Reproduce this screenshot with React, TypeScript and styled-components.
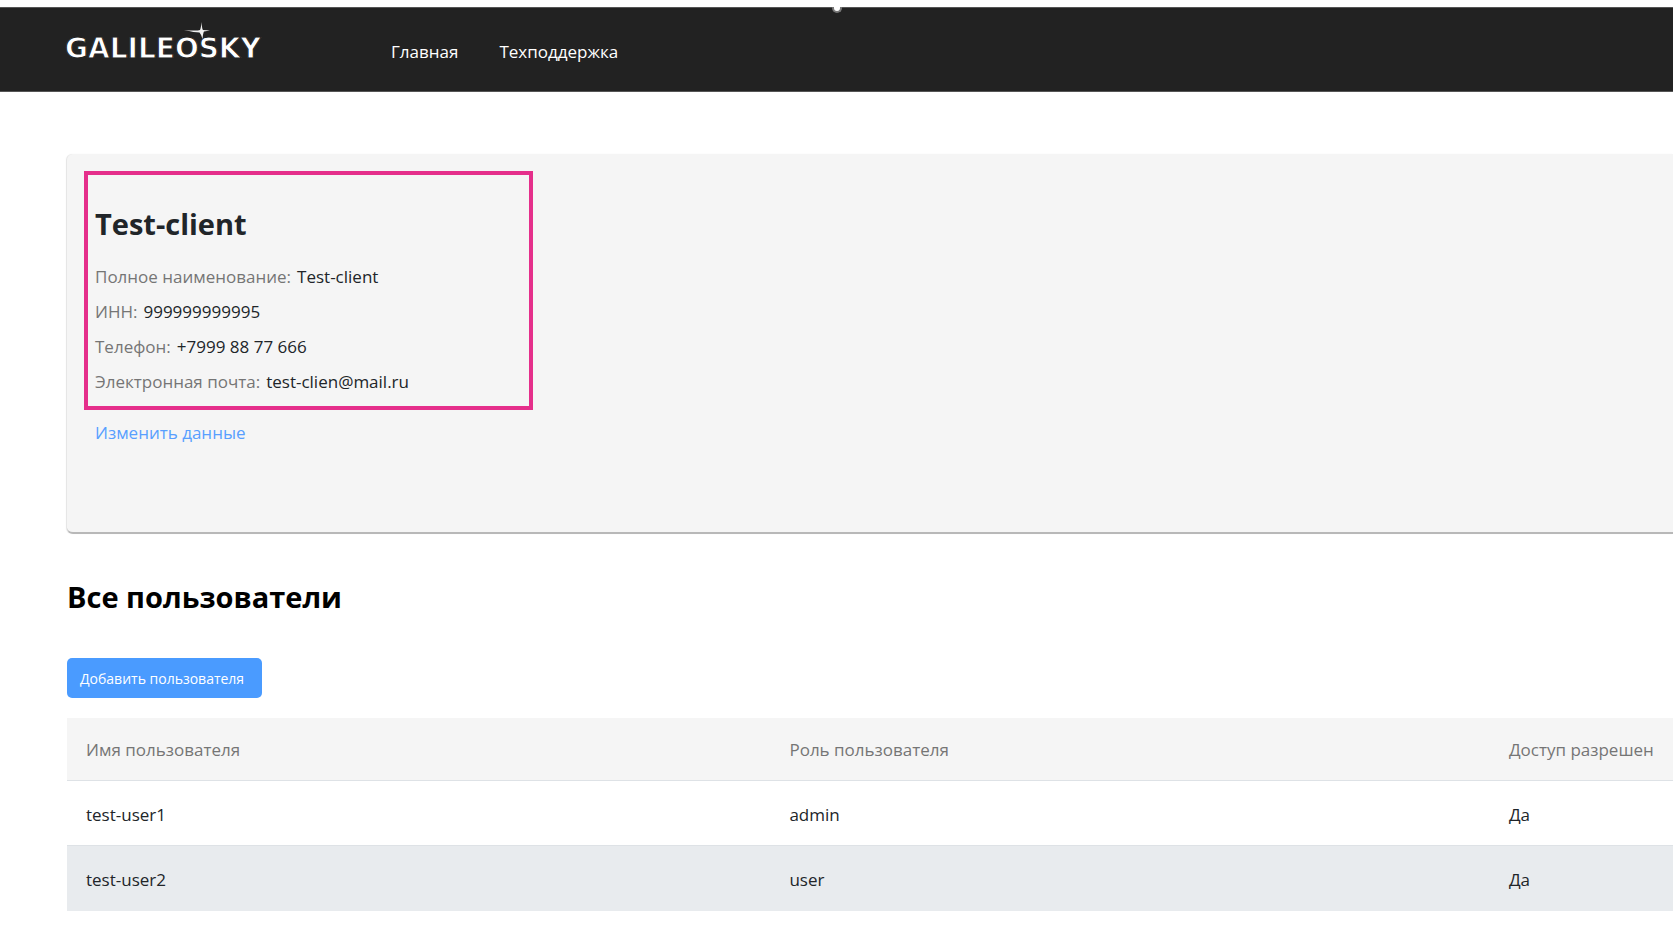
import React from "react";
import styled, { createGlobalStyle } from "styled-components";

const GlobalStyle = createGlobalStyle`
  *, *::before, *::after { box-sizing: border-box; }
  body {
    margin: 0;
    background: #fff;
    color: #212529;
    font-family: "Open Sans", "Noto Sans", sans-serif;
    font-size: 17px;
    line-height: 24px;
  }
  h1, h2, p, dl, dd { margin: 0; }
  a { text-decoration: none; }
`;

const Page = styled.div`
  position: relative;
  padding: 7px 7px 0 0;
`;

const Handle = styled.span`
  position: absolute;
  top: 7px;
  left: 50%;
  width: 10px;
  height: 6px;
  margin-left: -8px;
  background: #fff;
  border: 2px solid #777;
  border-top: 0;
  border-radius: 0 0 5px 5px;
`;

const Header = styled.header`
  display: flex;
  align-items: center;
  gap: 123px;
  height: 85px;
  padding-left: 64px;
  background: #222;
  border-top: 1px solid #555;
  border-bottom: 1px solid #555;
`;

const LogoLink = styled.a`
  display: block;
  height: 56px;
`;

const Nav = styled.nav`
  display: flex;
  gap: 41px;
  padding-top: 4px;
`;

const NavLink = styled.a`
  color: #fff;
`;

const Main = styled.main`
  padding: 62px 0 24px 67px;
`;

const Card = styled.section`
  min-height: 380px;
  padding: 17px;
  background: #f5f5f5;
  border-radius: 6px 0 0 6px;
  border-bottom: 2px solid #b8b8b8;
  box-shadow: -1px 0 1px #e4e4e4;
`;

const Highlight = styled.div`
  max-width: 449px;
  padding: 29px 7px 7px;
  border: 4px solid #e52f8b;
`;

const Title = styled.h1`
  font-size: 29px;
  line-height: 40px;
  font-weight: 700;
`;

const Details = styled.dl`
  margin-top: 15px;
`;

const Detail = styled.div`
  display: flex;
  gap: 6px;
  line-height: 35px;
`;

const Term = styled.dt`
  color: #757575;
`;

const EditLink = styled.a`
  display: inline-block;
  margin: 11px;
  color: #589fff;
`;

const SectionTitle = styled.h2`
  margin-top: 43px;
  color: #000;
  font-size: 29px;
  line-height: 40px;
  font-weight: 700;
`;

const AddButton = styled.button`
  display: block;
  height: 40px;
  margin: 41px 0 20px;
  padding: 0 18px 0 13px;
  border: 0;
  border-radius: 5px;
  background: #4a9bff;
  color: #fff;
  font-family: inherit;
  font-size: 14px;
`;

const Table = styled.table`
  width: 100%;
  table-layout: fixed;
  border-collapse: separate;
  border-spacing: 0;
  text-align: left;
`;

const HeadCell = styled.th<{ $width?: string }>`
  width: ${(p) => p.$width ?? "auto"};
  height: 63px;
  padding: 2px 0 0 19px;
  background: #f5f5f5;
  border-bottom: 1px solid #dee2e6;
  color: #757575;
  font-weight: 400;
  white-space: nowrap;
`;

const Row = styled.tr<{ $shaded: boolean }>`
  background: ${(p) => (p.$shaded ? "#e8ebee" : "#fff")};
`;

const Cell = styled.td`
  height: 65px;
  padding: 3px 0 0 19px;
  border-bottom: 1px solid #dee2e6;
  tr:last-child > & { border-bottom-color: #e8ebee; }
`;

const details = [
  ["Полное наименование:", "Test-client"],
  ["ИНН:", "999999999995"],
  ["Телефон:", "+7999 88 77 666"],
  ["Электронная почта:", "test-clien@mail.ru"],
];

const users = [
  { name: "test-user1", role: "admin", access: "Да" },
  { name: "test-user2", role: "user", access: "Да" },
];

function Logo() {
  return (
    <svg width="204" height="56" viewBox="-3 0 204 56" role="img" aria-label="Galileosky">
      <text
        x="-2"
        y="36"
        fill="#fff"
        stroke="#222"
        strokeWidth="1"
        fontFamily="'DejaVu Sans', sans-serif"
        fontWeight="700"
        fontSize="28"
      >
        GALILEOSKY
      </text>
      <path
        d="M134.500 0 Q135 7 136 8 L143 8.500 L137 9.500 Q136 11 135.500 17 Q134 12 132.500 10.500 Q128 10.500 117 8 Q130 9 133 8 Q134 6 134.500 0Z"
        fill="#f0f0f0"
      />
    </svg>
  );
}

export default function App() {
  return (
    <>
      <GlobalStyle />
      <Page>
        <Header>
          <LogoLink href="#" aria-label="Galileosky">
            <Logo />
          </LogoLink>
          <Nav>
            <NavLink href="#">Главная</NavLink>
            <NavLink href="#support">Техподдержка</NavLink>
          </Nav>
        </Header>
        <Handle />
        <Main>
          <Card>
            <Highlight>
              <Title>Test-client</Title>
              <Details>
                {details.map(([term, value]) => (
                  <Detail key={term}>
                    <Term>{term}</Term>
                    <dd>{value}</dd>
                  </Detail>
                ))}
              </Details>
            </Highlight>
            <EditLink href="#edit">Изменить данные</EditLink>
          </Card>
          <SectionTitle>Все пользователи</SectionTitle>
          <AddButton type="button">Добавить пользователя</AddButton>
          <Table>
            <thead>
              <tr>
                <HeadCell $width="43.8%">Имя пользователя</HeadCell>
                <HeadCell $width="44.8%">Роль пользователя</HeadCell>
                <HeadCell>Доступ разрешен</HeadCell>
              </tr>
            </thead>
            <tbody>
              {users.map((user, i) => (
                <Row key={user.name} $shaded={i % 2 === 1}>
                  <Cell>{user.name}</Cell>
                  <Cell>{user.role}</Cell>
                  <Cell>{user.access}</Cell>
                </Row>
              ))}
            </tbody>
          </Table>
        </Main>
      </Page>
    </>
  );
}
